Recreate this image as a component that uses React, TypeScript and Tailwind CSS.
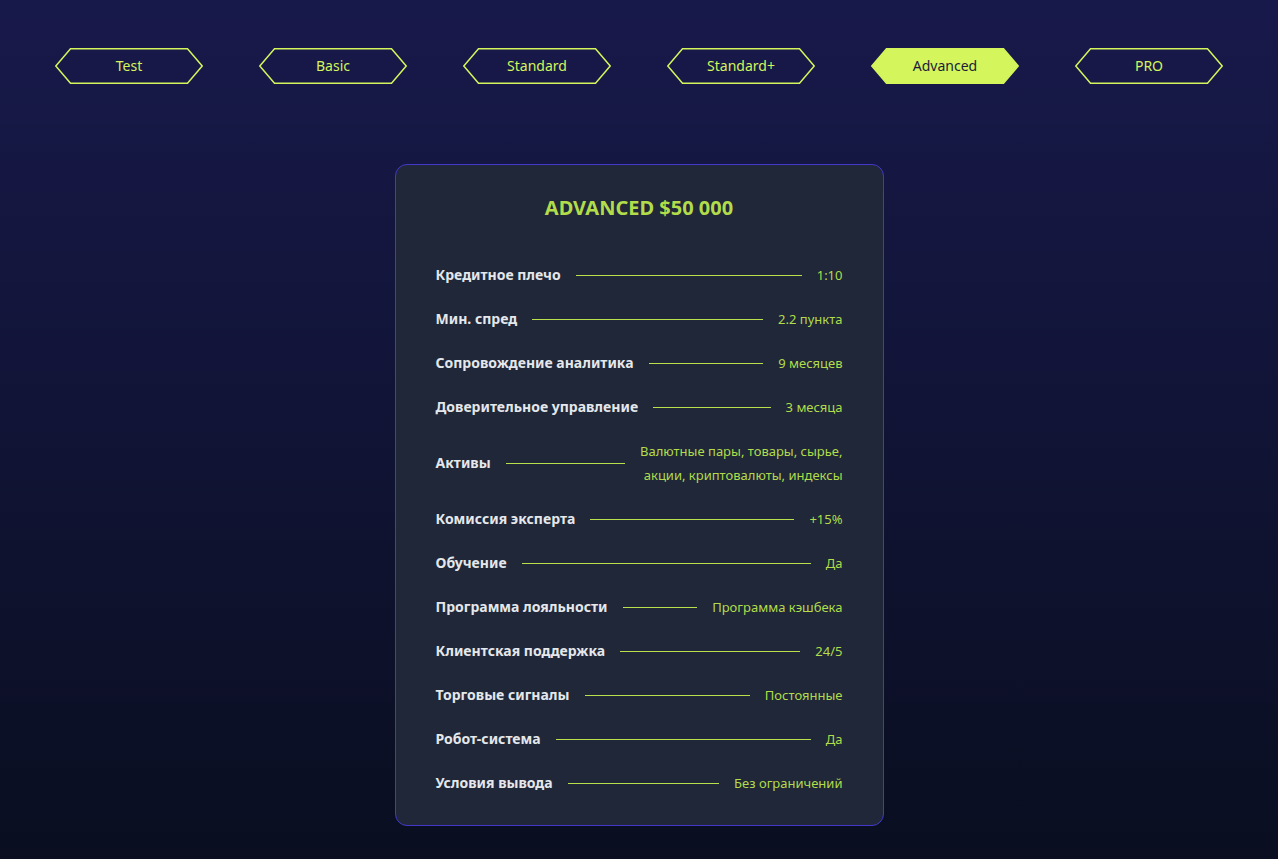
import React, { useState } from "react";

const plans = ["Test", "Basic", "Standard", "Standard+", "Advanced", "PRO"];

const rows: { label: string; value: string[] }[] = [
    { label: "Кредитное плечо", value: ["1:10"] },
    { label: "Мин. спред", value: ["2.2 пункта"] },
    { label: "Сопровождение аналитика", value: ["9 месяцев"] },
    { label: "Доверительное управление", value: ["3 месяца"] },
    { label: "Активы", value: ["Валютные пары, товары, сырье,", "акции, криптовалюты, индексы"] },
    { label: "Комиссия эксперта", value: ["+15%"] },
    { label: "Обучение", value: ["Да"] },
    { label: "Программа лояльности", value: ["Программа кэшбека"] },
    { label: "Клиентская поддержка", value: ["24/5"] },
    { label: "Торговые сигналы", value: ["Постоянные"] },
    { label: "Робот-система", value: ["Да"] },
    { label: "Условия вывода", value: ["Без ограничений"] },
];

const PlanTab: React.FC<{ name: string; active: boolean; onClick: () => void }> = ({ name, active, onClick }) => (
    <button
        onClick={onClick}
        className={`relative w-[148px] h-[36px] flex items-center justify-center text-[14px] leading-[20px] pb-px ${
            active ? "text-[#1a1c3a]" : "text-[#d4f55b]"
        }`}
    >
        <svg className="absolute inset-0 w-full h-full" viewBox="0 0 148 36" fill="none">
            <polygon
                points="0.8,18 15.5,0.75 132.5,0.75 147.2,18 132.5,35.25 15.5,35.25"
                fill={active ? "#d4f55b" : "none"}
                stroke="#d4f55b"
                strokeWidth="1.5"
            />
        </svg>
        <span className="relative">{name}</span>
    </button>
);

export default function App() {
    const [active, setActive] = useState("Advanced");

    return (
        <div
            className="min-h-screen w-full bg-gradient-to-b from-[#18194b] to-[#0a0e20] pt-[48px] pb-[34px]"
            style={{ fontFamily: "'Noto Sans', 'Open Sans', sans-serif" }}
        >
            <div className="flex justify-center gap-[56px]">
                {plans.map((p) => (
                    <PlanTab key={p} name={p} active={p === active} onClick={() => setActive(p)} />
                ))}
            </div>

            <div className="mt-[80px] mx-auto w-[489px] rounded-[12px] border border-[#4338ca] bg-[#1f2739] px-[40px] pt-[29px] pb-[30px]">
                <h2 className="text-center text-[20px] leading-[28px] font-bold text-[#b2dc4a]">
                    {active.toUpperCase()} $50 000
                </h2>

                <div className="mt-[41px] flex flex-col gap-[20px]">
                    {rows.map((r) => (
                        <div key={r.label} className="flex items-center">
                            <span className="text-[14px] leading-[24px] font-bold text-[#e5e7eb] whitespace-nowrap">
                                {r.label}
                            </span>
                            <div className="flex-1 h-px bg-[#b8e04a] mx-[15px]"></div>
                            <div className="text-right text-[13px] leading-[24px] text-[#b2dc4a] whitespace-nowrap">
                                {r.value.map((v) => (
                                    <div key={v}>{v}</div>
                                ))}
                            </div>
                        </div>
                    ))}
                </div>
            </div>
        </div>
    );
}
